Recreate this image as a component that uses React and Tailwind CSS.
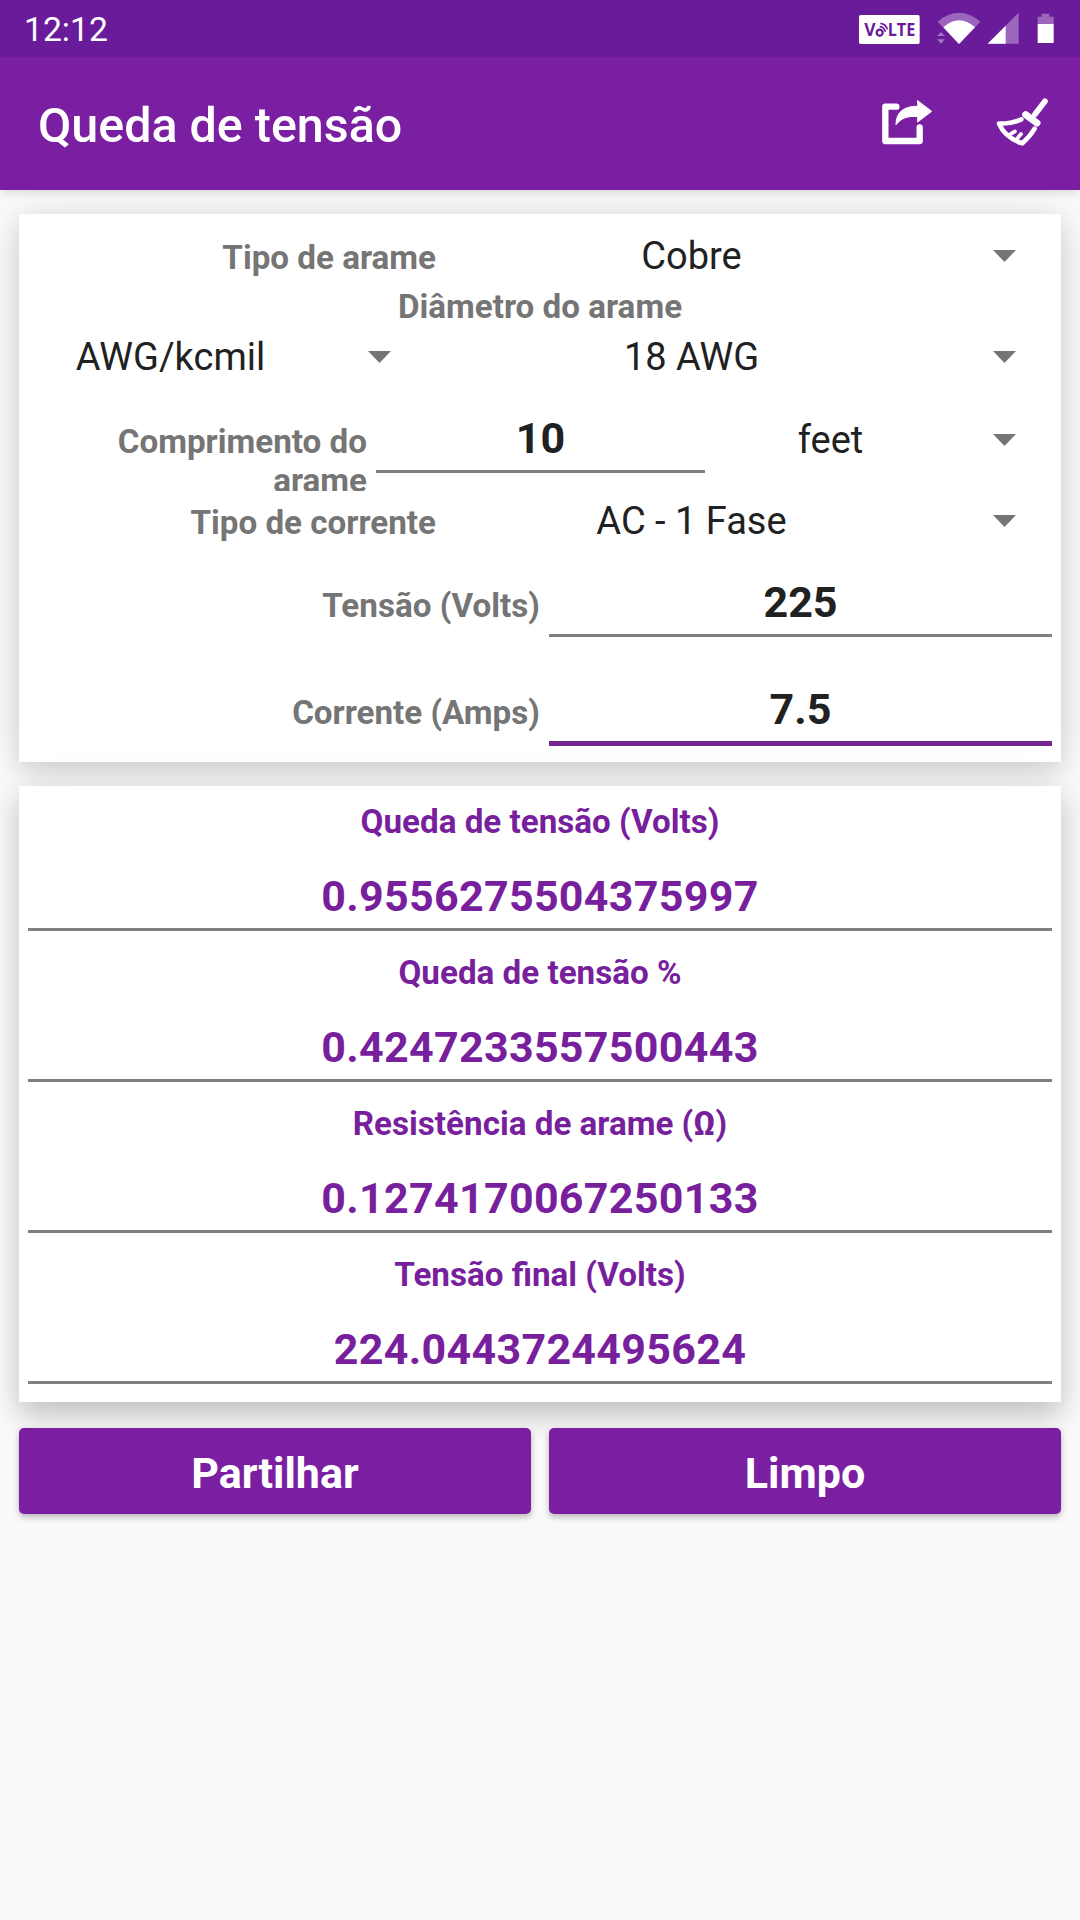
function Caret() {
  return (
    <div className="flex w-[114px] shrink-0 justify-center">
      <svg width="23" height="12" viewBox="0 0 24 12" preserveAspectRatio="none"><path d="M0 0h24L12 12z" fill="#757575" /></svg>
    </div>
  );
}

function Spinner({ value, className }) {
  return (
    <div className={"flex items-center " + className}>
      <span className="flex-1 text-center text-[38px] leading-[62px] text-[#212121]">{value}</span>
      <Caret />
    </div>
  );
}

function Label({ children, className }) {
  return <div className={"text-right text-[33.2px] font-bold leading-[39px] text-[#757575] " + className}>{children}</div>;
}

function Field({ value, className }) {
  return (
    <div className={"pt-[18px] text-center text-[43px] font-bold leading-[64px] text-[#212121] " + className}>{value}</div>
  );
}

const results = [
  ["Queda de tensão (Volts)", "0.9556275504375997"],
  ["Queda de tensão %", "0.4247233557500443"],
  ["Resistência de arame (Ω)", "0.1274170067250133"],
  ["Tensão final (Volts)", "224.0443724495624"],
];

function StatusBar() {
  return (
    <div className="flex h-[57px] items-start justify-between bg-[#6a1b9a] pl-[24px] text-white">
      <span className="pt-[10px] text-[33.7px] leading-[40px]">12:12</span>
      <div className="flex h-[57px] items-start">
        <svg width="221" height="57" viewBox="0 0 663 171">
          <rect x="0" y="45" width="182" height="87" rx="5" fill="#fff" />
          <g fill="#6a1b9a" fontFamily="Open Sans, sans-serif" fontWeight="700">
            <text x="16" y="108" fontSize="51" textLength="34" lengthAdjust="spacingAndGlyphs">V</text>
            <text x="86" y="108" fontSize="51" textLength="83" lengthAdjust="spacingAndGlyphs">LTE</text>
          </g>
          <circle cx="62" cy="98" r="9" fill="none" stroke="#6a1b9a" strokeWidth="7" />
          <path d="M62 80q13 0 17 15M64 70q17 2 21 18" fill="none" stroke="#6a1b9a" strokeWidth="5" />
          <path d="M236 65Q300 12 364 65L300 132z" fill="#fff" fillOpacity=".33" />
          <path d="M253 82Q300 40 348 82L300 132z" fill="#fff" />
          <path d="M235 108l11-12 11 12zM235 118h22l-11 13z" fill="#a678c4" />
          <path d="M479 38v93H386z" fill="#fff" fillOpacity=".33" />
          <path d="M440 77v54H386z" fill="#fff" />
          <path d="M536 50h12v-9h23v9h13v22h-48z" fill="#fff" fillOpacity=".33" />
          <path d="M536 72h48v57h-48z" fill="#fff" />
        </svg>
      </div>
    </div>
  );
}

export default function App() {
  return (
    <div className="flex h-[1920px] w-[1080px] flex-col overflow-hidden bg-[#fafafa] font-[Roboto,sans-serif]">
      <header className="relative z-10 shadow-[0_3px_8px_rgba(0,0,0,0.12)]">
        <StatusBar />
        <div className="flex h-[133px] items-start justify-between bg-[#7b1fa2] pl-[38px] pr-[31px]">
          <h1 className="pt-[39px] text-[48.4px] font-medium leading-[60px] text-white">Queda de tensão</h1>
          <div className="flex gap-[61px] pt-[40px] text-white">
            <svg width="54" height="50" viewBox="120 291 162 150" strokeLinejoin="round" strokeLinecap="round">
              <path d="M169 320H136V423H239V382" fill="none" stroke="currentColor" strokeWidth="19" />
              <path d="M233 302L275 334L233 366V350C203 347 184 354 168 374C168 338 190 318 233 319z" fill="currentColor" stroke="currentColor" strokeWidth="3" />
            </svg>
            <svg width="54" height="50" viewBox="465 291 162 150" fill="none" stroke="currentColor" strokeWidth="14" strokeLinecap="round" strokeLinejoin="round">
              <path d="M615 304L585 343" strokeWidth="17" />
              <path d="M557 344L591 369" strokeWidth="21" />
              <path d="M544 358Q515 372 477 371Q495 413 547 430Q571 408 584 386" />
              <path d="M505 406L525 394M527 421L543 402" strokeWidth="11" />
            </svg>
          </div>
        </div>
      </header>

      <main className="flex flex-col gap-6 px-[19px] pt-6">
        <section className="flex h-[548px] flex-col bg-white pt-[11px] shadow-[0_8px_20px_rgba(0,0,0,0.1),0_4px_40px_rgba(0,0,0,0.12)]">
          <div className="flex h-[62px]">
            <Label className="w-[417px] pt-[13px]">Tipo de arame</Label>
            <Spinner value="Cobre" className="flex-1" />
          </div>
          <div className="text-center text-[33.2px] font-bold leading-[39px] text-[#757575]">Diâmetro do arame</div>
          <div className="flex h-[62px]">
            <Spinner value="AWG/kcmil" className="w-[417px]" />
            <Spinner value="18 AWG" className="flex-1" />
          </div>
          <div className="flex h-[103px] overflow-hidden">
            <Label className="w-[348px] pt-[34px]">Comprimento do<br />arame</Label>
            <Field value="10" className="ml-[9px] h-[85px] w-[329px] border-b-[3px] border-[#808080]" />
            <Spinner value="feet" className="ml-[9px] flex-1" />
          </div>
          <div className="flex h-[61px]">
            <Label className="w-[417px] pt-[12px]">Tipo de corrente</Label>
            <Spinner value="AC - 1 Fase" className="h-[59px] flex-1" />
          </div>
          <div className="flex h-[107px]">
            <Label className="w-[521px] pt-[34px]">Tensão (Volts)</Label>
            <Field value="225" className="ml-[9px] h-[85px] w-[503px] border-b-[3px] border-[#808080]" />
          </div>
          <div className="flex">
            <Label className="w-[521px] pt-[34px]">Corrente (Amps)</Label>
            <Field value="7.5" className="ml-[9px] h-[87px] w-[503px] border-b-[5px] border-[#74278f]" />
          </div>
        </section>

        <section className="flex h-[616px] flex-col bg-white px-[9px] pt-[16px] shadow-[0_14px_26px_rgba(0,0,0,0.18),0_4px_40px_rgba(0,0,0,0.08)]">
          {results.map(([label, value]) => (
            <div key={label} className="h-[151px] shrink-0 text-center font-bold text-[#771f9c]">
              <div className="text-[33.2px] leading-[39px]">{label}</div>
              <div className="h-[90px] border-b-[3px] border-[#808080] pt-[23px] text-[43px] leading-[64px] tracking-[0.3px]">{value}</div>
            </div>
          ))}
        </section>

        <div className="mt-[2px] flex gap-[18px]">
          {["Partilhar", "Limpo"].map((name) => (
            <button key={name} className="h-[86px] flex-1 rounded-[5px] bg-[#7b1fa2] pt-[3px] text-[43px] font-bold leading-[64px] text-white shadow-[0_3px_6px_rgba(0,0,0,0.28)]">
              {name}
            </button>
          ))}
        </div>
      </main>
    </div>
  );
}
